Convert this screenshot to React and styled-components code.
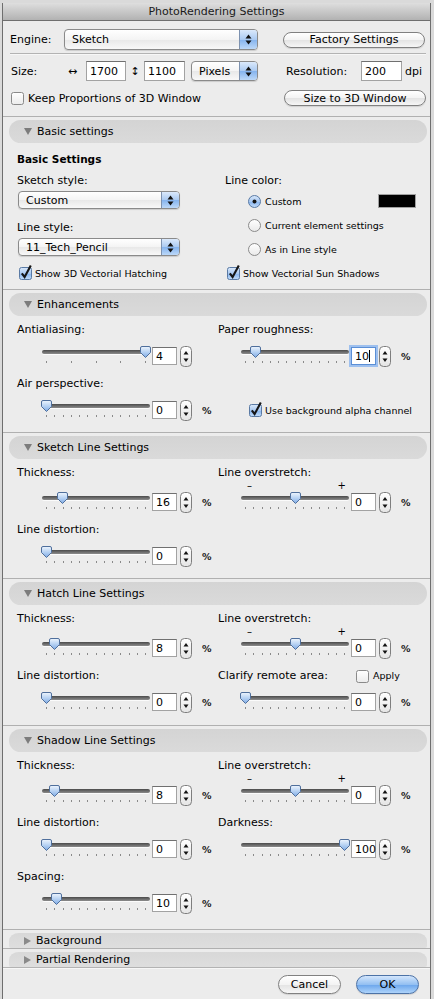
import styled, { createGlobalStyle, css } from 'styled-components';

const GlobalStyle = createGlobalStyle`
  html, body {
    margin: 0;
    padding: 0;
    background: #dadada;
  }
  body {
    font-family: "DejaVu Sans", "Liberation Sans", sans-serif;
    font-size: 11px;
    color: #000;
  }
`;

// dialog frame
const Window = styled.div`
  margin: 3px 0 0 2px;
  width: 427px;
  height: 996px;
  background: #ececec;
  border-left: 1px solid #6e6e6e;
  border-right: 1px solid #6e6e6e;
  overflow: hidden;
  display: flex;
  flex-direction: column;
`;

const TitleBar = styled.div`
  flex: none;
  height: 17px;
  line-height: 17px;
  border-bottom: 1px solid #6f6f6f;
  background: linear-gradient(#dedede, #b2b2b2);
  text-align: center;
  font-size: 11px;
  color: #1a1a1a;
`;

// top block (engine / size)
const TopPanel = styled.div`
  padding: 0 4px 0 7px;
`;

const TopRow = styled.div`
  display: flex;
  align-items: center;
  height: ${({ $h }) => $h}px;
  margin-top: ${({ $mt }) => $mt}px;
`;

const FieldLabel = styled.span`
  flex: none;
  width: ${({ $w }) => ($w ? `${$w}px` : 'auto')};
  padding-left: ${({ $pl }) => $pl || 0}px;
  margin-left: ${({ $ml }) => $ml || 0}px;
  box-sizing: border-box;
  font-size: 11px;
  white-space: nowrap;
`;

const Glyph = styled.span`
  flex: none;
  width: 18px;
  text-align: ${({ $align }) => $align || 'center'};
  font-size: 11px;
`;

const Rule = styled.div`
  margin-top: ${({ $mt }) => $mt || 0}px;
  height: 1px;
  background: #b3b3b3;
  border-bottom: 1px solid #f7f7f7;
`;

const PopUp = styled.div`
  flex: none;
  display: flex;
  align-items: center;
  width: ${({ $w }) => $w}px;
  height: ${({ $h }) => $h}px;
  margin-left: ${({ $ml }) => $ml || 0}px;
  margin-top: ${({ $mt }) => $mt || 0}px;
  box-sizing: border-box;
  border: 1px solid #8a8a8a;
  border-radius: 4px;
  background: linear-gradient(#ffffff, #f4f4f4 50%, #e8e8e8 51%, #f8f8f8);
  box-shadow: 0 1px 1px rgba(0, 0, 0, 0.14);
  padding-left: 7px;
  overflow: hidden;
  font-size: 11px;
`;

const PopUpText = styled.span`
  flex: 1;
  white-space: nowrap;
`;

const PopUpArrows = styled.span`
  align-self: stretch;
  width: 17px;
  display: flex;
  align-items: center;
  justify-content: center;
  border-left: 1px solid #7d92b0;
  background: linear-gradient(#dbe9fb, #aacaf2 50%, #84b3ee 51%, #bcd8f8);
`;

const PushButton = styled.div`
  flex: none;
  width: ${({ $w }) => $w}px;
  height: ${({ $h }) => $h || 16}px;
  margin-left: ${({ $ml }) => ($ml === 'auto' ? 'auto' : `${$ml || 0}px`)};
  box-sizing: border-box;
  border: 1px solid #808080;
  border-radius: 10px;
  background: linear-gradient(#ffffff, #f3f3f3 50%, #e3e3e3 51%, #f6f6f6);
  box-shadow: 0 1px 1px rgba(0, 0, 0, 0.12);
  display: flex;
  align-items: center;
  justify-content: center;
  font-size: 11px;
  ${({ $primary }) =>
    $primary &&
    css`
      border-color: #4c72a6;
      background: linear-gradient(#d3e6fc, #94c0f2 50%, #6aa5ec 51%, #aed3fa);
    `}
`;

const TextBox = styled.div`
  flex: none;
  width: ${({ $w }) => $w}px;
  height: ${({ $h }) => $h}px;
  box-sizing: border-box;
  background: #fff;
  border: 1px solid #a2a2a2;
  border-top-color: #707070;
  padding-left: ${({ $pl }) => $pl || 3}px;
  display: flex;
  align-items: center;
  font-size: 11px;
  ${({ $focus }) =>
    $focus &&
    css`
      border: 1px solid #5b8fd6;
      box-shadow: 0 0 0 2px #9ec0ee;
    `}
`;

const Caret = styled.i`
  width: 1px;
  height: 12px;
  background: #000;
`;

// sections
const SectionWrap = styled.div`
  border-top: 1px solid #b0b0b0;
  margin-top: ${({ $mt }) => $mt || 0}px;
`;

const Pill = styled.div`
  margin: 3px 3px 0 6px;
  height: ${({ $open }) => ($open ? 23 : 15)}px;
  border-radius: ${({ $open }) => ($open ? '12px' : '10px 10px 2px 2px / 8px 8px 2px 2px')};
  background: ${({ $open }) => ($open ? 'linear-gradient(#d4d4d4, #dadada)' : 'linear-gradient(#d8d8d8, #dedede)')};
  display: flex;
  align-items: center;
  padding-left: 15px;
  font-size: 11px;
`;

const PillTitle = styled.span`
  margin-left: 5px;
`;

const Content = styled.div`
  padding: ${({ $pt }) => $pt}px 14px ${({ $pb }) => $pb}px 14px;
`;

const Heading = styled.div`
  height: 14px;
  line-height: 14px;
  font-weight: bold;
  font-size: 10.5px;
`;

const BasicGrid = styled.div`
  display: grid;
  grid-template-columns: 208px 1fr;
  margin-top: ${({ $mt }) => $mt || 0}px;
`;

const Col = styled.div`
  display: flex;
  flex-direction: column;
`;

const Label = styled.div`
  height: 14px;
  line-height: 14px;
  font-size: 11px;
  margin-top: ${({ $mt }) => $mt || 0}px;
  display: flex;
  align-items: center;
  white-space: nowrap;
`;

const OptionRow = styled.div`
  display: flex;
  align-items: center;
  height: ${({ $h }) => $h || 14}px;
  margin-top: ${({ $mt }) => $mt || 0}px;
  padding-left: ${({ $pl }) => $pl || 0}px;
`;

const OptionText = styled.span`
  margin-left: ${({ $gap }) => $gap || 4}px;
  font-size: ${({ $fs }) => $fs || 9.5}px;
  white-space: nowrap;
`;

const Swatch = styled.div`
  margin-left: auto;
  width: 38px;
  height: 14px;
  box-sizing: border-box;
  background: #000;
  border: 1px solid #a0a0a0;
`;

const Row = styled.div`
  display: grid;
  grid-template-columns: 201px 1fr;
  margin-top: ${({ $mt }) => $mt || 0}px;
`;

const Cell = styled.div`
  display: flex;
  flex-direction: column;
`;

const LabelSpacer = styled.span`
  flex: 0 0 ${({ $w }) => $w}px;
`;

const Marks = styled.div`
  width: 108px;
  height: 12px;
  margin-left: ${({ $indent }) => $indent}px;
  box-sizing: border-box;
  padding: 0 3px 0 6px;
  display: flex;
  justify-content: space-between;
  font-size: 10px;
  line-height: 12px;
`;

const ControlRow = styled.div`
  display: flex;
  align-items: center;
  height: 20px;
  margin-top: ${({ $mt }) => $mt}px;
  padding-left: ${({ $indent }) => $indent}px;
`;

const SliderBox = styled.div`
  position: relative;
  flex: none;
  width: 108px;
  height: 20px;
`;

const Track = styled.div`
  margin-top: 4px;
  height: 4px;
  border-radius: 2px;
  background: linear-gradient(#4a4a4a, #8c8c8c);
  box-shadow: 0 1px 0 rgba(255, 255, 255, 0.8);
`;

const Ticks = styled.div`
  display: flex;
  justify-content: space-between;
  margin-top: 7px;
  padding: 0 4px;
`;

const Tick = styled.i`
  width: 1px;
  height: 2px;
  background: #8a8a8a;
`;

const ThumbWrap = styled.div`
  position: absolute;
  top: 0;
  width: 11px;
  height: 12px;
`;

const NumBox = styled(TextBox)`
  margin-left: 2px;
`;

const StepperWrap = styled.div`
  flex: none;
  margin-left: 3px;
  height: 21px;
`;

const Pct = styled.span`
  margin-left: 10px;
  font-size: 9.5px;
  font-weight: bold;
  color: #222;
`;

const Footer = styled.div`
  display: flex;
  justify-content: flex-end;
  gap: 15px;
  padding-right: 11px;
  margin-top: 6px;
`;

// drawings
function Arrows() {
  return (
    <svg width="7" height="11" viewBox="0 0 7 11">
      <path d="M0.5 4.5 L3.5 0.5 L6.5 4.5 Z" fill="#111" />
      <path d="M0.5 6.5 L3.5 10.5 L6.5 6.5 Z" fill="#111" />
    </svg>
  );
}

function Disclosure({ open }) {
  return open ? (
    <svg width="8" height="7" viewBox="0 0 8 7">
      <path d="M0 0 H8 L4 7 Z" fill="#7c7c7c" />
    </svg>
  ) : (
    <svg width="7" height="8" viewBox="0 0 7 8">
      <path d="M0 0 V8 L7 4 Z" fill="#8a8a8a" />
    </svg>
  );
}

function Check({ on }) {
  return (
    <svg width="13" height="13" viewBox="0 0 13 13" overflow="visible">
      <defs>
        <linearGradient id="chkOn" x1="0" y1="0" x2="0" y2="1">
          <stop offset="0" stopColor="#dbe9fa" />
          <stop offset="0.5" stopColor="#a9c9f1" />
          <stop offset="0.51" stopColor="#86b4ee" />
          <stop offset="1" stopColor="#c2dcf8" />
        </linearGradient>
        <linearGradient id="chkOff" x1="0" y1="0" x2="0" y2="1">
          <stop offset="0" stopColor="#ffffff" />
          <stop offset="1" stopColor="#ebebeb" />
        </linearGradient>
      </defs>
      <rect x="0.5" y="0.5" width="12" height="12" rx="2" fill={on ? 'url(#chkOn)' : 'url(#chkOff)'} stroke={on ? '#5a7aa4' : '#8a8a8a'} />
      {on && <path d="M2.8 6.3 L5.6 10 L11.8 -1.5" fill="none" stroke="#161616" strokeWidth="2.1" />}
    </svg>
  );
}

function Radio({ on }) {
  return (
    <svg width="13" height="13" viewBox="0 0 13 13">
      <defs>
        <linearGradient id="radOn" x1="0" y1="0" x2="0" y2="1">
          <stop offset="0" stopColor="#dbe9fa" />
          <stop offset="0.5" stopColor="#a6c7f1" />
          <stop offset="0.51" stopColor="#84b2ee" />
          <stop offset="1" stopColor="#c6defa" />
        </linearGradient>
        <linearGradient id="radOff" x1="0" y1="0" x2="0" y2="1">
          <stop offset="0" stopColor="#ffffff" />
          <stop offset="1" stopColor="#e9e9e9" />
        </linearGradient>
      </defs>
      <circle cx="6.5" cy="6.5" r="6" fill={on ? 'url(#radOn)' : 'url(#radOff)'} stroke={on ? '#5a7aa4' : '#8a8a8a'} />
      {on && <circle cx="6.5" cy="6.5" r="2" fill="#151515" />}
    </svg>
  );
}

function Stepper() {
  return (
    <StepperWrap>
      <svg width="12" height="21" viewBox="0 0 12 21">
        <defs>
          <linearGradient id="stp" x1="0" y1="0" x2="0" y2="1">
            <stop offset="0" stopColor="#ffffff" />
            <stop offset="1" stopColor="#e4e4e4" />
          </linearGradient>
        </defs>
        <rect x="0.5" y="0.5" width="11" height="20" rx="4" fill="url(#stp)" stroke="#7e7e7e" />
        <path d="M3.5 8.5 L6 5 L8.5 8.5 Z" fill="#111" />
        <path d="M3.5 12.5 L6 16 L8.5 12.5 Z" fill="#111" />
      </svg>
    </StepperWrap>
  );
}

function Slider({ value, min = 0, max = 100, ticks = 13 }) {
  const center = 4 + ((value - min) / (max - min)) * 99 + 0.5;
  return (
    <SliderBox>
      <Track />
      <Ticks>
        {Array.from({ length: ticks }, (_, i) => (
          <Tick key={i} />
        ))}
      </Ticks>
      <ThumbWrap style={{ left: `${center - 5.5}px` }}>
        <svg width="11" height="12" viewBox="0 0 11 12">
          <defs>
            <linearGradient id="thm" x1="0" y1="0" x2="0" y2="1">
              <stop offset="0" stopColor="#eef5fd" />
              <stop offset="0.5" stopColor="#b7d2f3" />
              <stop offset="1" stopColor="#7eaae4" />
            </linearGradient>
          </defs>
          <path d="M2 0.5 H9 Q10.5 0.5 10.5 2 V6.5 L5.5 11.5 L0.5 6.5 V2 Q0.5 0.5 2 0.5 Z" fill="url(#thm)" stroke="#4f6f9c" />
        </svg>
      </ThumbWrap>
    </SliderBox>
  );
}

function SliderField({ label, value, min, max, ticks, pct = true, marks, gap = 9, indent = 25, focus, extra }) {
  return (
    <Cell>
      <Label>
        {extra ? <LabelSpacer $w={138}>{label}</LabelSpacer> : label}
        {extra}
      </Label>
      {marks && (
        <Marks $indent={indent}>
          <span>–</span>
          <span>+</span>
        </Marks>
      )}
      <ControlRow $mt={marks ? 0 : gap} $indent={indent}>
        <Slider value={value} min={min} max={max} ticks={ticks} />
        <NumBox $w={25} $h={18} $focus={focus}>
          {value}
          {focus && <Caret />}
        </NumBox>
        <Stepper />
        {pct && <Pct>%</Pct>}
      </ControlRow>
    </Cell>
  );
}

function Section({ title, open = true, children }) {
  return (
    <SectionWrap>
      <Pill $open={open}>
        <Disclosure open={open} />
        <PillTitle>{title}</PillTitle>
      </Pill>
      {children}
    </SectionWrap>
  );
}

export default function App() {
  return (
    <>
      <GlobalStyle />
      <Window>
        <TitleBar>PhotoRendering Settings</TitleBar>

        <TopPanel>
          <TopRow $h={21} $mt={8}>
            <FieldLabel $w={54}>Engine:</FieldLabel>
            <PopUp $w={194} $h={21}>
              <PopUpText>Sketch</PopUpText>
              <PopUpArrows>
                <Arrows />
              </PopUpArrows>
            </PopUp>
            <PushButton $w={142} $ml={25}>
              Factory Settings
            </PushButton>
          </TopRow>
          <Rule $mt={3} />
          <TopRow $h={20} $mt={6}>
            <FieldLabel $w={58} $pl={1}>
              Size:
            </FieldLabel>
            <Glyph $align="left">↔</Glyph>
            <TextBox $w={40} $h={20}>1700</TextBox>
            <Glyph>↕</Glyph>
            <TextBox $w={41} $h={20}>1100</TextBox>
            <PopUp $w={67} $h={20} $ml={6}>
              <PopUpText>Pixels</PopUpText>
              <PopUpArrows>
                <Arrows />
              </PopUpArrows>
            </PopUp>
            <FieldLabel $w={75} $ml={28}>
              Resolution:
            </FieldLabel>
            <TextBox $w={41} $h={20}>200</TextBox>
            <FieldLabel $ml={3}>dpi</FieldLabel>
          </TopRow>
          <TopRow $h={16} $mt={9}>
            <OptionRow $pl={1} $h={16}>
              <Check />
              <OptionText $fs={11}>Keep Proportions of 3D Window</OptionText>
            </OptionRow>
            <PushButton $w={142} $ml="auto">
              Size to 3D Window
            </PushButton>
          </TopRow>
        </TopPanel>

        <SectionWrap $mt={10}>
          <Pill $open>
            <Disclosure open />
            <PillTitle>Basic settings</PillTitle>
          </Pill>
          <Content $pt={9} $pb={9}>
            <Heading>Basic Settings</Heading>
            <BasicGrid $mt={8}>
              <Col>
                <Label>Sketch style:</Label>
                <PopUp $w={162} $h={18} $ml={1} $mt={3}>
                  <PopUpText>Custom</PopUpText>
                  <PopUpArrows>
                    <Arrows />
                  </PopUpArrows>
                </PopUp>
                <Label $mt={12}>Line style:</Label>
                <PopUp $w={162} $h={18} $ml={1} $mt={3}>
                  <PopUpText>11_Tech_Pencil</PopUpText>
                  <PopUpArrows>
                    <Arrows />
                  </PopUpArrows>
                </PopUp>
              </Col>
              <Col>
                <Label>Line color:</Label>
                <OptionRow $mt={6} $pl={23}>
                  <Radio on />
                  <OptionText>Custom</OptionText>
                  <Swatch />
                </OptionRow>
                <OptionRow $mt={10} $pl={23}>
                  <Radio />
                  <OptionText>Current element settings</OptionText>
                </OptionRow>
                <OptionRow $mt={10} $pl={23}>
                  <Radio />
                  <OptionText>As in Line style</OptionText>
                </OptionRow>
              </Col>
            </BasicGrid>
            <BasicGrid $mt={11}>
              <OptionRow $h={13} $pl={2}>
                <Check on />
                <OptionText $gap={3}>Show 3D Vectorial Hatching</OptionText>
              </OptionRow>
              <OptionRow $h={13} $pl={2}>
                <Check on />
                <OptionText $gap={3}>Show Vectorial Sun Shadows</OptionText>
              </OptionRow>
            </BasicGrid>
          </Content>
        </SectionWrap>

        <Section title="Enhancements">
          <Content $pt={7} $pb={12}>
            <Row>
              <SliderField label="Antialiasing:" value={4} min={0} max={4} ticks={5} pct={false} />
              <SliderField label="Paper roughness:" value={10} indent={23} focus />
            </Row>
            <Row $mt={11}>
              <SliderField label="Air perspective:" value={0} />
              <Cell>
                <Label />
                <ControlRow $mt={9} $indent={31}>
                  <Check on />
                  <OptionText $gap={3}>Use background alpha channel</OptionText>
                </ControlRow>
              </Cell>
            </Row>
          </Content>
        </Section>

        <Section title="Sketch Line Settings">
          <Content $pt={7} $pb={12}>
            <Row>
              <SliderField label="Thickness:" value={16} gap={12} />
              <SliderField label="Line overstretch:" value={0} min={-100} max={100} marks indent={23} />
            </Row>
            <Row $mt={11}>
              <SliderField label="Line distortion:" value={0} />
            </Row>
          </Content>
        </Section>

        <Section title="Hatch Line Settings">
          <Content $pt={7} $pb={13}>
            <Row>
              <SliderField label="Thickness:" value={8} gap={12} />
              <SliderField label="Line overstretch:" value={0} min={-100} max={100} marks indent={23} />
            </Row>
            <Row $mt={11}>
              <SliderField label="Line distortion:" value={0} />
              <SliderField
                label="Clarify remote area:"
                value={0}
                indent={23}
                extra={
                  <OptionRow $h={13}>
                    <Check />
                    <OptionText>Apply</OptionText>
                  </OptionRow>
                }
              />
            </Row>
          </Content>
        </Section>

        <Section title="Shadow Line Settings">
          <Content $pt={7} $pb={16}>
            <Row>
              <SliderField label="Thickness:" value={8} gap={12} />
              <SliderField label="Line overstretch:" value={0} min={-100} max={100} marks indent={23} />
            </Row>
            <Row $mt={11}>
              <SliderField label="Line distortion:" value={0} />
              <SliderField label="Darkness:" value={100} indent={23} />
            </Row>
            <Row $mt={11}>
              <SliderField label="Spacing:" value={10} />
            </Row>
          </Content>
        </Section>

        <Section title="Background" open={false} />
        <Section title="Partial Rendering" open={false} />
        <Rule />

        <Footer>
          <PushButton $w={63} $h={19}>
            Cancel
          </PushButton>
          <PushButton $w={63} $h={19} $primary>
            OK
          </PushButton>
        </Footer>
      </Window>
    </>
  );
}
